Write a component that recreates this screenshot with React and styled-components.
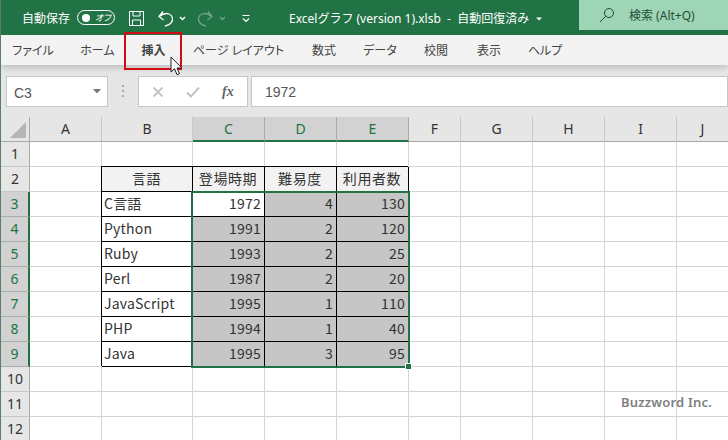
import React from "react";
import styled, { createGlobalStyle } from "styled-components";

const Global = createGlobalStyle`
  html, body { margin: 0; padding: 0; background: #fff; }
  body { width: 728px; height: 440px; overflow: hidden; font-family: "Noto Sans", "Noto Sans CJK JP", sans-serif; }
`;

const UI = `"Noto Sans", "Noto Sans CJK JP", sans-serif`;
const CELL = `"Noto Sans CJK JP", "Noto Sans", sans-serif`;

const Page = styled.div`
  position: relative;
  width: 728px;
  height: 440px;
  overflow: hidden;
  display: flex;
  flex-direction: column;
  background: #e6e6e6;
  border-left: 1px solid #5b7d69;
  box-sizing: border-box;
`;

const TitleBar = styled.div`
  height: 35px;
  flex: none;
  background: #217346;
  color: #fff;
  display: flex;
  align-items: flex-start;
  font-family: ${UI};
  font-size: 12px;
  margin-left: -1px;
`;
const AutoSave = styled.span`
  margin: 10px 0 0 22px;
  width: 48px;
  line-height: 18px;
  white-space: nowrap;
`;
const Toggle = styled.span`
  margin: 10px 0 0 7px;
  width: 38px;
  height: 15px;
  flex: none;
  box-sizing: border-box;
  border: 1px solid #fff;
  border-radius: 8px;
  display: flex;
  align-items: center;
  padding-left: 4px;
  gap: 5px;
  font-size: 9px;
  font-style: italic;
  font-feature-settings: "palt";
  white-space: nowrap;
`;
const Knob = styled.i`
  width: 8px;
  height: 8px;
  flex: none;
  background: #fff;
  border-radius: 50%;
`;
const Quick = styled.span`
  display: flex;
  margin-top: ${p => p.$top}px;
  margin-left: ${p => p.$left}px;
  opacity: ${p => p.$dim ? 0.35 : 1};
`;
const FileTitle = styled.span`
  margin: 10px 0 0 39px;
  line-height: 18px;
  width: 290px;
  flex: none;
  white-space: pre;
  display: flex;
  align-items: flex-start;
`;
const Search = styled.div`
  position: relative;
  width: 152px;
  height: 30px;
  flex: none;
  background: #9fd5b7;
  color: #1f4e35;
  display: flex;
  align-items: center;
  gap: 14px;
  padding-left: 20px;
  box-sizing: border-box;
`;

const Tabs = styled.nav`
  height: 30px;
  flex: none;
  background: #f3f3f3;
  display: flex;
  align-items: center;
  box-shadow: 0 3px 6px rgba(0,0,0,.16);
  position: relative;
  z-index: 1;
`;
const Tab = styled.span`
  box-sizing: border-box;
  width: ${p => p.$w}px;
  text-align: center;
  font-size: 12px;
  line-height: 30px;
  padding-top: 1px;
  color: #444;
  font-feature-settings: "palt";
  font-weight: ${p => p.$active ? 700 : 400};
  white-space: nowrap;
`;
const RedBox = styled.div`
  position: absolute;
  left: 123px;
  top: -3px;
  width: 58px;
  height: 38px;
  box-sizing: border-box;
  border: 2.5px solid #d40b12;
`;
const Pointer = styled.svg`
  position: absolute;
  left: 169px;
  top: 21px;
`;

const FormulaBar = styled.div`
  flex: none;
  height: 52px;
  padding: 11px 0 10px 5px;
  box-sizing: border-box;
  display: flex;
  align-items: stretch;
  background: #e6e6e6;
`;
const FieldBox = styled.div`
  box-sizing: border-box;
  background: #fff;
  border: 1px solid #c6c6c6;
  display: flex;
  align-items: center;
  width: ${p => p.$w ? p.$w + "px" : "auto"};
  flex: ${p => p.$w ? "none" : 1};
  margin-left: ${p => p.$gap || 0}px;
  color: #555;
  font-size: 14px;
  font-family: "Liberation Sans", sans-serif;
`;
const NameText = styled.span`
  flex: 1;
  padding-left: 7px;
  padding-top: 2px;
`;
const FormulaText = styled.span`
  padding-left: 13px;
`;
const Fx = styled.span`
  font-family: "Liberation Serif", serif;
  font-style: italic;
  font-weight: 700;
  font-size: 14px;
  color: #666;
  margin-left: 22px;
`;

const Sheet = styled.div`
  position: relative;
  flex: 1;
  display: grid;
  grid-template-columns: 29px 72px 91px 72px 72px 72px 52px 72px 72px 72px 52px;
  grid-template-rows: repeat(13, 25px);
  font-family: ${CELL};
  font-size: 14px;
  background: #fff;
`;
const Corner = styled.div`
  background: #e6e6e6;
  border-right: 1px solid #a8a8a8;
  border-bottom: 1px solid #a8a8a8;
  position: relative;
  overflow: hidden;
  &::after {
    content: "";
    position: absolute;
    right: 3px;
    bottom: 3px;
    border-style: solid;
    border-width: 0 0 16px 16px;
    border-color: transparent transparent #b5b5b5 transparent;
  }
`;
const ColHead = styled.div`
  box-sizing: border-box;
  background: ${p => p.$on ? "#d2d2d2" : "#e6e6e6"};
  color: ${p => p.$on ? "#217346" : "#333"};
  border-right: 1px solid ${p => p.$on ? "#ababab" : "#c8c8c8"};
  border-bottom: ${p => p.$on ? "2px solid #217346" : "1px solid #a8a8a8"};
  font-family: "Noto Sans", sans-serif;
  display: flex;
  align-items: center;
  justify-content: center;
  font-size: 14px;
  padding-bottom: 1px;
`;
const RowHead = styled.div`
  box-sizing: border-box;
  background: ${p => p.$on ? "#d2d2d2" : "#e6e6e6"};
  color: ${p => p.$on ? "#217346" : "#333"};
  border-bottom: 1px solid ${p => p.$on ? "#ababab" : "#c8c8c8"};
  border-right: ${p => p.$on ? "2px solid #217346" : "1px solid #a8a8a8"};
  font-family: "Noto Sans", sans-serif;
  display: flex;
  align-items: center;
  justify-content: center;
  font-size: 14px;
  padding-bottom: 1px;
`;
const Cell = styled.div`
  box-sizing: border-box;
  border-right: 1px solid ${p => p.$table ? "#000" : "#d4d4d4"};
  border-bottom: 1px solid ${p => p.$table ? "#000" : "#d4d4d4"};
  box-shadow: ${p => p.$table ? "-1px -1px 0 #000" : "none"};
  background: ${p => p.$head ? "#f2f2f2" : p.$fill ? "#c6c6c6" : "#fff"};
  color: #333;
  display: flex;
  align-items: center;
  letter-spacing: ${p => p.$head ? "0.6px" : "0.2px"};
  white-space: nowrap;
  overflow: hidden;
  padding: 0 3px 2px 2px;
  justify-content: ${p => p.$head ? "center" : p.$num ? "flex-end" : "flex-start"};
`;
const Selection = styled.div`
  position: absolute;
  left: 190px;
  top: 74px;
  width: 219px;
  height: 177px;
  box-sizing: border-box;
  border: 2px solid #217346;
  pointer-events: none;
`;
const Handle = styled.div`
  position: absolute;
  right: -4px;
  bottom: -4px;
  width: 5px;
  height: 5px;
  background: #217346;
  border: 1px solid #fff;
`;
const Watermark = styled.div`
  position: absolute;
  left: 620px;
  top: 393px;
  color: #7f7f7f;
  font-family: "Noto Sans", sans-serif;
  font-weight: 600;
  font-size: 13px;
  letter-spacing: 0.2px;
  white-space: nowrap;
`;

const Chevron = () => (
  <svg width="7" height="5" viewBox="0 0 7 5" fill="none" stroke="#fff" strokeWidth="1.400">
    <path d="M1 1l2.500 2.500L6 1" />
  </svg>
);

const tabs = [
  ["ファイル", 64], ["ホーム", 65], ["挿入", 47], ["ページ レイアウト", 123],
  ["数式", 48], ["データ", 64], ["校閲", 48], ["表示", 58], ["ヘルプ", 54],
];
const cols = ["A", "B", "C", "D", "E", "F", "G", "H", "I", "J"];
const data = [
  ["C言語", 1972, 4, 130], ["Python", 1991, 2, 120], ["Ruby", 1993, 2, 25],
  ["Perl", 1987, 2, 20], ["JavaScript", 1995, 1, 110], ["PHP", 1994, 1, 40], ["Java", 1995, 3, 95],
];
const heads = ["言語", "登場時期", "難易度", "利用者数"];

function rowCells(r) {
  const out = [];
  cols.forEach((c, i) => {
    const k = `${c}${r}`;
    if (r === 2 && i >= 1 && i <= 4) {
      out.push(<Cell key={k} $table $head>{heads[i - 1]}</Cell>);
    } else if (r >= 3 && r <= 9 && i >= 1 && i <= 4) {
      const v = data[r - 3][i - 1];
      const num = i > 1;
      out.push(<Cell key={k} $table $num={num} $fill={i > 2 || (i === 2 && r > 3)}>{v}</Cell>);
    } else {
      out.push(<Cell key={k} />);
    }
  });
  return out;
}

export default function App() {
  return (
    <Page>
      <Global />
      <TitleBar>
        <AutoSave>自動保存</AutoSave>
        <Toggle><Knob />オフ</Toggle>
        <Quick $left={13} $top={10}>
          <svg width="17" height="17" viewBox="0 0 17 17" fill="none" stroke="#fff" strokeWidth="1">
            <path d="M1.500 1.500h14v14h-14zM5 1.500v4.500h7V1.500M4.500 15.500V10h8v5.500" />
          </svg>
        </Quick>
        <Quick $left={13} $top={10}>
          <svg width="16" height="17" viewBox="0 0 16 17" fill="none" stroke="#fff" strokeWidth="1.300">
            <path d="M5 1.500L1 6.500l4.500 3.500M1.500 6.500C4 4.200 8 3 11 4c4 1.500 4.500 6 2 9-1.500 1.700-3.500 2.500-6 3" />
          </svg>
        </Quick>
        <Quick $left={5} $top={16}><Chevron /></Quick>
        <Quick $left={11} $top={10} $dim>
          <svg width="16" height="17" viewBox="0 0 16 17" fill="none" stroke="#fff" strokeWidth="1.300">
            <path d="M11 1.500l4 5-4.500 3.500M14.500 6.500C12 4.200 8 3 5 4 1 5.500.5 10 3 13c1.500 1.700 3.500 2.500 6 3" />
          </svg>
        </Quick>
        <Quick $left={6} $top={16} $dim><Chevron /></Quick>
        <Quick $left={16} $top={14}>
          <svg width="8" height="9" viewBox="0 0 8 9" fill="none" stroke="#fff" strokeWidth="1.200">
            <path d="M0.500 1.500h7M1 4.500l3 3 3-3" />
          </svg>
        </Quick>
        <FileTitle>
          Excelグラフ (version 1).xlsb  -  自動回復済み
          <Quick $left={7} $top={7}>
            <svg width="6" height="4" viewBox="0 0 6 4" fill="#fff"><path d="M0 .500h6L3 3.500z" /></svg>
          </Quick>
        </FileTitle>
        <Search>
          <svg width="16" height="16" viewBox="0 0 16 16" fill="none" stroke="#1f4e35" strokeWidth="1">
            <circle cx="10" cy="6" r="4.500" /><path d="M6.700 9.300L1 15" />
          </svg>
          検索 (Alt+Q)
        </Search>
      </TitleBar>
      <Tabs>
        {tabs.map(([t, w], i) => <Tab key={t} $w={w} $active={i === 2}>{t}</Tab>)}
        <RedBox />
        <Pointer width="13" height="21" viewBox="0 0 13 21">
          <path d="M1 1v15l3.500-3.300 2.500 6 2.500-1-2.500-5.700h4.800z" fill="#fff" stroke="#222" strokeWidth="1" />
        </Pointer>
      </Tabs>
      <FormulaBar>
        <FieldBox $w={102}>
          <NameText>C3</NameText>
          <svg width="8" height="5" viewBox="0 0 8 5" fill="#777" style={{ marginRight: 6 }}><path d="M0 0h8L4 4.500z" /></svg>
        </FieldBox>
        <Quick $left={13} $top={9}>
          <svg width="4" height="12" viewBox="0 0 4 12" fill="#aaa">
            <rect x="1" y="0" width="2" height="2" /><rect x="1" y="5" width="2" height="2" /><rect x="1" y="10" width="2" height="2" />
          </svg>
        </Quick>
        <FieldBox $w={110} $gap={13}>
          <svg width="12" height="12" viewBox="0 0 12 12" fill="none" stroke="#c4c4c4" strokeWidth="1.800" style={{ marginLeft: 13 }}>
            <path d="M1.500 1.500l9 9M10.500 1.500l-9 9" />
          </svg>
          <svg width="14" height="12" viewBox="0 0 14 12" fill="none" stroke="#c4c4c4" strokeWidth="2" style={{ marginLeft: 22 }}>
            <path d="M1 6.500L5 10.500 13 1.500" />
          </svg>
          <Fx>fx</Fx>
        </FieldBox>
        <FieldBox $gap={3}><FormulaText>1972</FormulaText></FieldBox>
      </FormulaBar>
      <Sheet>
        <Corner />
        {cols.map(c => <ColHead key={c} $on={"CDE".includes(c)}>{c}</ColHead>)}
        {Array.from({ length: 12 }, (_, i) => i + 1).map(r => (
          <React.Fragment key={r}>
            <RowHead $on={r >= 3 && r <= 9}>{r}</RowHead>
            {rowCells(r)}
          </React.Fragment>
        ))}
        <Selection><Handle /></Selection>
      </Sheet>
      <Watermark>Buzzword Inc.</Watermark>
    </Page>
  );
}
